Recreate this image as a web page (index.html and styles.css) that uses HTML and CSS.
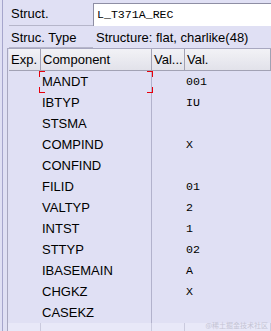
FILE: index.html
```html
<!DOCTYPE html>
<html>
<head>
  <link rel="stylesheet" href="styles.css">
</head>
<body>
  <div class="window">
    <div class="form">
      <div class="field">
        <div class="label">Struct.</div>
        <div class="input">L_T371A_REC</div>
      </div>
      <div class="field type-row">
        <div class="label">Struc. Type</div>
        <div class="info">Structure: flat, charlike(48)</div>
      </div>
    </div>

    <div class="table">
      <div class="head">
        <div class="th">Exp.</div>
        <div class="th">Component</div>
        <div class="th">Val...</div>
        <div class="th">Val.</div>
      </div>
      <div class="row"><div></div><div class="comp focused">MANDT<span class="corner tl"></span><span class="corner tr"></span><span class="corner bl"></span><span class="corner br"></span></div><div></div><div class="val">001</div></div>
      <div class="row"><div></div><div class="comp">IBTYP</div><div></div><div class="val">IU</div></div>
      <div class="row"><div></div><div class="comp">STSMA</div><div></div><div class="val"></div></div>
      <div class="row"><div></div><div class="comp">COMPIND</div><div></div><div class="val">X</div></div>
      <div class="row"><div></div><div class="comp">CONFIND</div><div></div><div class="val"></div></div>
      <div class="row"><div></div><div class="comp">FILID</div><div></div><div class="val">01</div></div>
      <div class="row"><div></div><div class="comp">VALTYP</div><div></div><div class="val">2</div></div>
      <div class="row"><div></div><div class="comp">INTST</div><div></div><div class="val">1</div></div>
      <div class="row"><div></div><div class="comp">STTYP</div><div></div><div class="val">02</div></div>
      <div class="row"><div></div><div class="comp">IBASEMAIN</div><div></div><div class="val">A</div></div>
      <div class="row"><div></div><div class="comp">CHGKZ</div><div></div><div class="val">X</div></div>
      <div class="row"><div></div><div class="comp">CASEKZ</div><div></div><div class="val"></div></div>
      <div class="row empty"><div></div><div></div><div></div><div></div></div>
    </div>
  </div>
  <div class="watermark">@稀土掘金技术社区</div>
</body>
</html>
```

FILE: styles.css
```css
html, body {
  margin: 0;
  height: 331px;
  overflow: hidden;
}

body {
  background: #e0e0f4;
  font-family: "Liberation Sans", Arial, sans-serif;
  font-size: 13px;
  color: #000;
  position: relative;
}

.window {
  margin-left: 2px;
  border-left: 1px solid #a6a6cc;
  padding-left: 4px;
  height: 331px;
}

.form {
  padding-left: 2px;
  padding-top: 3px;
}

.field {
  display: flex;
  height: 23px;
}

.label {
  width: 84px;
  box-sizing: border-box;
  height: 23px;
  line-height: 22px;
  padding-left: 2px;
  border-bottom: 1px solid #b6b6ca;
}

.input {
  flex: 1;
  background: #fff;
  border-top: 1px solid #8e8ea4;
  border-left: 1px solid #8e8ea4;
  font-family: "Liberation Mono", "Courier New", monospace;
  font-size: 11.6px;
  line-height: 22px;
  padding-left: 3px;
}

.type-row {
  height: 22px;
}

.type-row .label {
  height: 22px;
  line-height: 24px;
}

.info {
  line-height: 24px;
  padding-left: 3px;
}

.table {
  border-top: 1px solid #a8a8c0;
  border-left: 1px solid #a8a8c0;
}

.head,
.row {
  display: grid;
  grid-template-columns: 33px 111px 33px 1fr;
}

.head {
  height: 22px;
  padding-left: 1px;
  grid-template-columns: 32px 111px 33px 1fr;
}

.th {
  box-sizing: border-box;
  height: 22px;
  line-height: 22px;
  padding-left: 2px;
  border-right: 1px solid #a2a2b4;
  border-bottom: 1px solid #a2a2b4;
  background: linear-gradient(#f2f2f6, #e2e2ea);
  white-space: nowrap;
  overflow: hidden;
}

.row {
  grid-template-rows: 21px;
  height: 21px;
  line-height: 20px;
}

.row > div {
  box-sizing: border-box;
  padding-top: 1px;
}

.comp {
  padding-left: 1px;
  border-right: 1px solid #b2b2cc;
}

.val {
  font-family: "Liberation Mono", "Courier New", monospace;
  font-size: 11.6px;
  padding-left: 1px;
}

/* red focus corners around the selected cell */
.focused {
  position: relative;
}

.corner {
  position: absolute;
  width: 5px;
  height: 5px;
  border: 0 solid #e8000c;
  z-index: 2;
}

.tl { left: -2px; top: 0; border-top-width: 1px; border-left-width: 1px; }
.tr { right: -2px; top: 0; border-top-width: 1px; border-right-width: 1px; }
.bl { left: -2px; top: 16px; border-bottom-width: 1px; border-left-width: 1px; }
.br { right: -2px; top: 16px; border-bottom-width: 1px; border-right-width: 1px; }

.empty {
  background: #e8e8f8;
}

.empty div {
  border-right: 1px solid #cacade;
}

.watermark {
  position: absolute;
  right: 3px;
  bottom: 1px;
  font-family: "Noto Sans CJK SC", sans-serif;
  font-size: 7px;
  color: #c4c4d4;
}
```
